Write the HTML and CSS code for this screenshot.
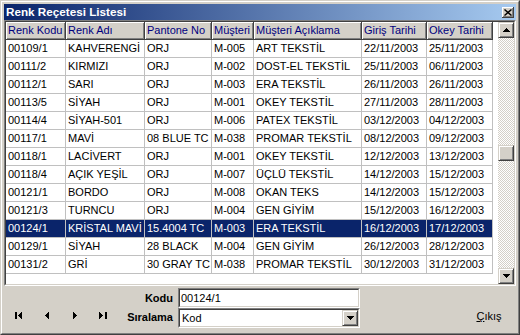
FILE: index.html
```html
<!DOCTYPE html>
<html lang="tr">
<head>
<meta charset="utf-8">
<title>Renk Reçetesi Listesi</title>
<link rel="stylesheet" href="styles.css">
</head>
<body>
<div class="window">
  <div class="frame">
    <div class="titlebar">
      <span class="title">Renk Reçetesi Listesi</span>
      <span class="close"><svg width="8" height="7" viewBox="0 0 8 7"><path d="M0.5 0.5 L7.5 6.5 M7.5 0.5 L0.5 6.5" stroke="#000" stroke-width="1.4"/></svg></span>
    </div>
    <div class="grid">
      <div class="grid-in">
        <div class="table">
          <div class="row head"><div>Renk Kodu</div><div>Renk Adı</div><div>Pantone No</div><div>Müşteri</div><div>Müşteri Açıklama</div><div>Giriş Tarihi</div><div>Okey Tarihi</div><div class="fill"></div></div>
          <div class="row"><div>00109/1</div><div>KAHVERENGİ</div><div>ORJ</div><div>M-005</div><div>ART TEKSTİL</div><div>22/11/2003</div><div>25/11/2003</div><div class="fill"></div></div>
          <div class="row"><div>00111/2</div><div>KIRMIZI</div><div>ORJ</div><div>M-002</div><div>DOST-EL TEKSTİL</div><div>25/11/2003</div><div>06/11/2003</div><div class="fill"></div></div>
          <div class="row"><div>00112/1</div><div>SARI</div><div>ORJ</div><div>M-003</div><div>ERA TEKSTİL</div><div>26/11/2003</div><div>26/11/2003</div><div class="fill"></div></div>
          <div class="row"><div>00113/5</div><div>SİYAH</div><div>ORJ</div><div>M-001</div><div>OKEY TEKSTİL</div><div>27/11/2003</div><div>28/11/2003</div><div class="fill"></div></div>
          <div class="row"><div>00114/4</div><div>SİYAH-501</div><div>ORJ</div><div>M-006</div><div>PATEX TEKSTİL</div><div>03/12/2003</div><div>04/12/2003</div><div class="fill"></div></div>
          <div class="row"><div>00117/1</div><div>MAVİ</div><div>08 BLUE TC</div><div>M-038</div><div>PROMAR TEKSTİL</div><div>08/12/2003</div><div>09/12/2003</div><div class="fill"></div></div>
          <div class="row"><div>00118/1</div><div>LACİVERT</div><div>ORJ</div><div>M-001</div><div>OKEY TEKSTİL</div><div>12/12/2003</div><div>13/12/2003</div><div class="fill"></div></div>
          <div class="row"><div>00118/4</div><div>AÇIK YEŞİL</div><div>ORJ</div><div>M-007</div><div>ÜÇLÜ TEKSTİL</div><div>14/12/2003</div><div>15/12/2003</div><div class="fill"></div></div>
          <div class="row"><div>00121/1</div><div>BORDO</div><div>ORJ</div><div>M-008</div><div>OKAN TEKS</div><div>14/12/2003</div><div>15/12/2003</div><div class="fill"></div></div>
          <div class="row"><div>00121/3</div><div>TURNCU</div><div>ORJ</div><div>M-004</div><div>GEN GİYİM</div><div>15/12/2003</div><div>16/12/2003</div><div class="fill"></div></div>
          <div class="row sel"><div>00124/1</div><div>KRİSTAL MAVİ</div><div>15.4004 TC</div><div>M-003</div><div>ERA TEKSTİL</div><div>16/12/2003</div><div>17/12/2003</div><div class="fill"></div></div>
          <div class="row"><div>00129/1</div><div>SİYAH</div><div>28 BLACK</div><div>M-004</div><div>GEN GİYİM</div><div>26/12/2003</div><div>28/12/2003</div><div class="fill"></div></div>
          <div class="row"><div>00131/2</div><div>GRİ</div><div>30 GRAY TC</div><div>M-038</div><div>PROMAR TEKSTİL</div><div>30/12/2003</div><div>31/12/2003</div><div class="fill"></div></div>
        </div>
        <div class="vscroll">
          <div class="sbtn"><svg width="7" height="4" viewBox="0 0 7 4" shape-rendering="crispEdges"><path d="M3 0h1v1h1v1h1v1h1v1H0V3h1V2h1V1h1z" fill="#000"/></svg></div>
          <div class="track"><div class="thumb"></div></div>
          <div class="sbtn"><svg width="7" height="4" viewBox="0 0 7 4" shape-rendering="crispEdges"><path d="M0 0h7v1H6v1H5v1H4v1H3V3H2V2H1V1H0z" fill="#000"/></svg></div>
        </div>
      </div>
    </div>
    <div class="panel">
      <div class="label lbl-kodu">Kodu</div>
      <div class="field fld-kodu"><div class="field-in">00124/1</div></div>
      <div class="nav">
        <span class="navbtn"><svg width="8" height="7" viewBox="0 0 8 7" shape-rendering="crispEdges"><rect x="0" y="0" width="2" height="7" fill="#000"/><path d="M3 3h1V2h1V1h1V0h1v7H6V6H5V5H4V4H3z" fill="#000"/></svg></span>
        <span class="navbtn"><svg width="4" height="7" viewBox="0 0 4 7" shape-rendering="crispEdges"><path d="M0 3h1V2h1V1h1V0h1v7H3V6H2V5H1V4H0z" fill="#000"/></svg></span>
        <span class="navbtn"><svg width="4" height="7" viewBox="0 0 4 7" shape-rendering="crispEdges"><path d="M0 0h1v1h1v1h1v1h1v1H3v1H2v1H1v1H0z" fill="#000"/></svg></span>
        <span class="navbtn"><svg width="8" height="7" viewBox="0 0 8 7" shape-rendering="crispEdges"><path d="M0 0h1v1h1v1h1v1h1v1H3v1H2v1H1v1H0z" fill="#000"/><rect x="6" y="0" width="2" height="7" fill="#000"/></svg></span>
      </div>
      <div class="label lbl-sira">Sıralama</div>
      <div class="field fld-sira"><div class="field-in combo"><span class="combo-text">Kod</span><span class="dropbtn"><svg width="7" height="4" viewBox="0 0 7 4" shape-rendering="crispEdges"><path d="M0 0h7v1H6v1H5v1H4v1H3V3H2V2H1V1H0z" fill="#000"/></svg></span></div></div>
      <div class="exit"><u>Ç</u>ıkış</div>
    </div>
  </div>
</div>
</body>
</html>
```

FILE: styles.css
```css
* { box-sizing: border-box; }
html, body { margin: 0; padding: 0; }
body {
  width: 520px;
  height: 335px;
  overflow: hidden;
  background: #d4d0c8;
  font-family: "Liberation Sans", Arial, sans-serif;
  font-size: 11px;
  color: #000;
}
.window {
  width: 520px;
  height: 335px;
  border: 1px solid;
  border-color: #d4d0c8 #404040 #404040 #d4d0c8;
}
.frame {
  height: 100%;
  border: 1px solid;
  border-color: #fff #808080 #808080 #fff;
  padding: 2px;
  display: flex;
  flex-direction: column;
}
.titlebar {
  flex: none;
  height: 16px;
  display: flex;
  align-items: center;
  justify-content: space-between;
  padding: 0 2px;
  background: linear-gradient(to right, #0a246a, #a6caf0);
}
.title {
  color: #fff;
  font-weight: bold;
  font-size: 11.7px;
  line-height: 16px;
}
.close {
  width: 12px;
  height: 11px;
  display: flex;
  align-items: center;
  justify-content: center;
  background: #d4d0c8;
  box-shadow: inset -1px -1px #404040, inset 1px 1px #fff, inset -2px -2px #808080;
}
.grid {
  flex: none;
  height: 266px;
  border: 1px solid;
  border-color: #808080 #fff #fff #808080;
}
.grid-in {
  height: 100%;
  display: flex;
  background: #fff;
  border: 1px solid;
  border-color: #404040 #d4d0c8 #d4d0c8 #404040;
}
.table { flex: 1; }
.row {
  display: grid;
  grid-template-columns: 60px 79px 67px 42px 108px 65px 66px 1fr;
  height: 18px;
}
.row > div {
  padding-left: 2px;
  line-height: 17px;
  white-space: nowrap;
  overflow: hidden;
  border-right: 1px solid #c0c0c0;
  border-bottom: 1px solid #c0c0c0;
}
.row > .fill { border: none; background: #fff; }
.head > div {
  background: #d4d0c8;
  color: #000080;
  border-right-color: #404040;
  border-bottom-color: #404040;
  box-shadow: inset 1px 1px #fff, inset -1px -1px #808080;
}
.head > .fill { background: #fff; box-shadow: none; }
.sel > div { background: #0a246a; color: #fff; }
.sel > .fill { background: #fff; }

.vscroll {
  flex: none;
  width: 16px;
  display: flex;
  flex-direction: column;
}
.sbtn, .thumb, .dropbtn {
  background: #d4d0c8;
  border: 1px solid;
  border-color: #d4d0c8 #404040 #404040 #d4d0c8;
  box-shadow: inset 1px 1px #fff, inset -1px -1px #808080;
}
.sbtn {
  height: 16px;
  flex: none;
  display: flex;
  align-items: center;
  justify-content: center;
}
.track {
  flex: 1;
  background: repeating-conic-gradient(#fff 0% 25%, #d4d0c8 0% 50%) 0 0 / 2px 2px;
}
.thumb {
  height: 16px;
  margin-top: 107px;
}

.panel {
  flex: 1;
  display: grid;
  grid-template-columns: 114px 60px 182px 1fr;
  grid-template-rows: 20px 20px;
  padding-top: 2px;
}
.label {
  font-weight: bold;
  text-align: right;
  padding-right: 5px;
  display: flex;
  align-items: center;
  justify-content: flex-end;
}
.lbl-kodu { grid-column: 2; grid-row: 1; }
.lbl-sira { grid-column: 2; grid-row: 2; padding-bottom: 3px; }
.field {
  border: 1px solid;
  border-color: #808080 #fff #fff #808080;
}
.fld-kodu { grid-column: 3; grid-row: 1; }
.fld-sira { grid-column: 3; grid-row: 2; }
.field-in {
  height: 100%;
  background: #fff;
  border: 1px solid;
  border-color: #404040 #d4d0c8 #d4d0c8 #404040;
  padding-left: 1px;
  line-height: 16px;
}
.combo {
  display: flex;
  justify-content: space-between;
  padding-left: 2px;
}
.combo-text { line-height: 17px; }
.dropbtn {
  width: 16px;
  height: 16px;
  display: flex;
  align-items: center;
  justify-content: center;
}
.nav {
  grid-column: 1;
  grid-row: 2;
  display: flex;
  padding-left: 1px;
  padding-top: 4px;
}
.navbtn {
  width: 28px;
  height: 10px;
  display: flex;
  justify-content: center;
  align-items: flex-start;
}
.exit {
  grid-column: 4;
  grid-row: 2;
  justify-self: end;
  width: 52px;
  margin-right: 1px;
  text-align: center;
  line-height: 14px;
  padding-top: 1px;
}
.exit u { text-underline-offset: 1px; }
```
